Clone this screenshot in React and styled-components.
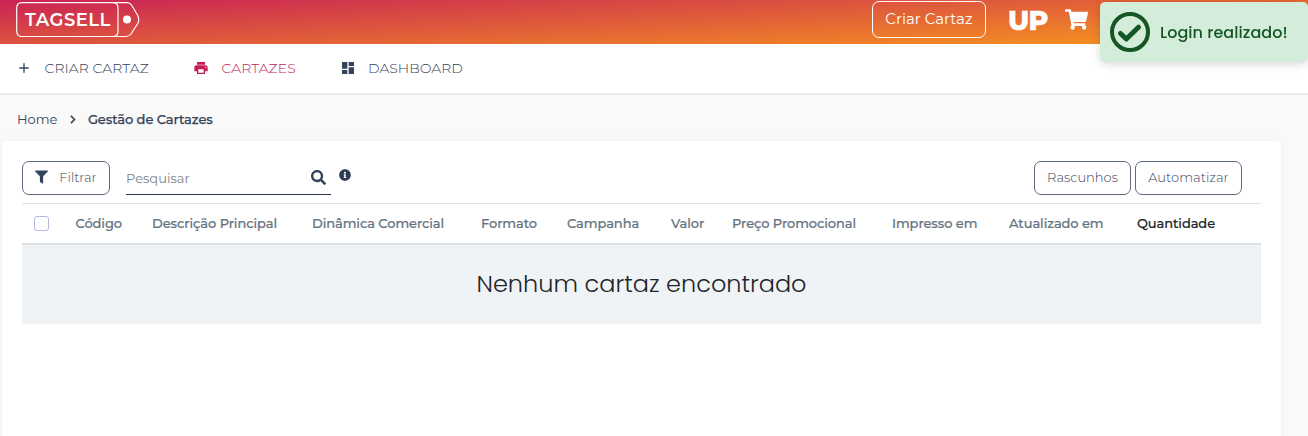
import React from "react";
import styled, { createGlobalStyle } from "styled-components";
import { FaShoppingCart, FaFilter, FaSearch, FaInfoCircle, FaChevronRight } from "react-icons/fa";
import { MdPrint, MdDashboard, MdAdd } from "react-icons/md";

const GlobalStyle = createGlobalStyle`
  * { box-sizing: border-box; }
  body {
    margin: 0;
    height: 436px;
    overflow: hidden;
    background: #f9f9f9;
    color: #34435a;
    font-family: Montserrat, Inter, "Liberation Sans", sans-serif;
  }
`;

const Label = styled.span`
  white-space: nowrap;
  letter-spacing: ${(p) => p.$track || 0}px;
`;

const Header = styled.header`
  display: flex;
  align-items: flex-start;
  height: 44px;
  padding: 1px 220px 0 16px;
  background: linear-gradient(177.1deg, #c92355, #f8991d);
  color: #fff;
`;

const Logo = styled.div`
  display: grid;
  width: 124px;
  height: 36px;
  margin-top: 1px;
  margin-right: auto;
  > * { grid-area: 1 / 1; }
`;

const LogoText = styled(Label)`
  padding-left: 9px;
  font-size: 18px;
  font-weight: 600;
  line-height: 36px;
`;

const HeaderButton = styled.button`
  width: 114px;
  height: 37px;
  padding: 0 0 2px;
  border: 1px solid #fff;
  border-radius: 7px;
  background: transparent;
  color: #fff;
  font: 400 15px Montserrat, Inter, sans-serif;
`;

const Initials = styled(Label)`
  width: 40px;
  margin: 0 17px 0 22px;
  font-size: 27px;
  font-weight: 800;
  line-height: 39px;
  -webkit-text-stroke: 0.4px currentColor;
`;

const CartIcon = styled(FaShoppingCart)`
  width: 23px;
  height: 21px;
  margin-top: 8px;
`;

const Nav = styled.nav`
  display: flex;
  height: 51px;
  padding: 0 0 1px 16px;
  border-bottom: 2px solid #ebebeb;
  background: #fff;
`;

const NavItem = styled.a`
  display: flex;
  align-items: center;
  width: ${(p) => p.$width}px;
  font-size: 14px;
  font-weight: 300;
  color: ${(p) => (p.$active ? "#c41c56" : "#34435a")};
  svg { width: 16px; height: 16px; margin-right: 12.5px; flex: none; }
`;

const Breadcrumb = styled.div`
  display: flex;
  align-items: center;
  height: 46px;
  padding: 2px 0 0 17px;
  font-size: 13px;
  svg {
    width: 8px;
    height: 9px;
    margin: 0 10.5px 0 12px;
    color: #465264;
    stroke: currentColor;
    stroke-width: 30px;
  }
`;

const Current = styled(Label)`
  font-weight: 500;
  -webkit-text-stroke: 0.25px currentColor;
`;

const Card = styled.main`
  width: 1279px;
  height: 310px;
  margin-left: 2px;
  padding: 20px 20px 0;
  border-radius: 5px;
  background: #fff;
  box-shadow: 0 0 12px rgba(0, 0, 0, 0.035);
`;

const Toolbar = styled.div`
  display: flex;
  align-items: flex-start;
  height: 42px;
  padding-right: 19px;
`;

const Button = styled.button`
  display: flex;
  align-items: center;
  justify-content: center;
  width: ${(p) => p.$width}px;
  height: 34px;
  margin-left: ${(p) => p.$left || 0}px;
  padding: 0 0 2px;
  border: 1px solid #5e6b80;
  border-radius: 7px;
  background: #fff;
  color: #34435a;
  font: 300 13px Montserrat, Inter, sans-serif;
  svg { width: 13px; height: 14px; margin-right: 11px; }
`;

const Search = styled.div`
  display: flex;
  align-items: center;
  justify-content: space-between;
  width: 205px;
  height: 34px;
  margin-left: 16px;
  padding-right: 5px;
  border-bottom: 1px solid #26354d;
  color: #7d858f;
  font-size: 13px;
  font-weight: 400;
  svg { width: 15px; height: 15px; color: #34435a; }
`;

const InfoIcon = styled(FaInfoCircle)`
  width: 12px;
  height: 12px;
  margin: 7.5px auto 0 8px;
  color: #2b3a50;
`;

const TableHead = styled.div`
  display: grid;
  grid-template-columns: 53.5px 76.5px 160px 169px 86px 104px 61px 160px 117px 128px 1fr;
  align-items: center;
  height: 42px;
  padding-bottom: 1px;
  border-top: 1px solid #dee2e6;
  border-bottom: 2px solid #dee2e6;
  color: #66737f;
  font-size: 13px;
  font-weight: 500;
`;

const Checkbox = styled.span`
  width: 15px;
  height: 15px;
  margin-left: 12px;
  border: 1px solid #b4b9e0;
  border-radius: 3px;
`;

const Column = styled(Label)`
  color: ${(p) => (p.$dark ? "#212529" : "inherit")};
  -webkit-text-stroke: 0.2px currentColor;
`;

const Empty = styled.div`
  height: 79px;
  background: #eff3f6;
  color: #212529;
  font-family: Poppins, Inter, sans-serif;
  font-size: 24px;
  font-weight: 300;
  line-height: 78px;
  text-align: center;
`;

const Toast = styled.div`
  position: fixed;
  top: 2px;
  right: 0;
  display: flex;
  align-items: center;
  width: 208px;
  height: 60px;
  padding-left: 10px;
  border-radius: 5px;
  background: #d4edda;
  box-shadow: 0 2px 10px rgba(0, 0, 0, 0.16);
  color: #155724;
  font-family: Poppins, Inter, sans-serif;
  font-size: 16px;
  font-weight: 500;
  svg { margin-right: 10px; }
`;

const columns = [
  "Código",
  "Descrição Principal",
  "Dinâmica Comercial",
  "Formato",
  "Campanha",
  "Valor",
  "Preço Promocional",
  "Impresso em",
  "Atualizado em",
  "Quantidade",
];

export default function App() {
  return (
    <>
      <GlobalStyle />
      <Header>
        <Logo>
          <svg width="124" height="36" viewBox="0 0 124 36" fill="none" stroke="#fff" strokeWidth="1.2">
            <path d="M6 .7H111Q114 .7 115.500 3L121.500 13Q124 17.500 121.500 22L115 32Q113 34.500 110 34.500H6Q.7 34.500 .7 29V6Q.7 .7 6 .7Z" />
            <path d="M97 .7Q102 .7 102 6V29Q102 34.500 97 34.500" />
            <circle cx="111" cy="17.500" r="4" fill="#fff" stroke="none" />
          </svg>
          <LogoText $track={0.5}>TAGSELL</LogoText>
        </Logo>
        <HeaderButton><Label>Criar Cartaz</Label></HeaderButton>
        <Initials $track={-0.8}>UP</Initials>
        <CartIcon />
      </Header>
      <Nav>
        <NavItem $width={177}><MdAdd /><Label $track={0.08}>CRIAR CARTAZ</Label></NavItem>
        <NavItem $width={146.5} $active><MdPrint /><Label $track={0.08}>CARTAZES</Label></NavItem>
        <NavItem $width={140}><MdDashboard /><Label>DASHBOARD</Label></NavItem>
      </Nav>
      <Breadcrumb>
        <Label>Home</Label>
        <FaChevronRight />
        <Current $track={-0.06}>Gestão de Cartazes</Current>
      </Breadcrumb>
      <Card>
        <Toolbar>
          <Button $width={88}><FaFilter /><Label>Filtrar</Label></Button>
          <Search><Label>Pesquisar</Label><FaSearch /></Search>
          <InfoIcon />
          <Button $width={97}><Label>Rascunhos</Label></Button>
          <Button $width={107} $left={4}><Label $track={0.05}>Automatizar</Label></Button>
        </Toolbar>
        <TableHead>
          <Checkbox />
          {columns.map((name) => (
            <Column key={name} $track={-0.08} $dark={name === "Quantidade"}>{name}</Column>
          ))}
        </TableHead>
        <Empty><Label>Nenhum cartaz encontrado</Label></Empty>
      </Card>
      <Toast>
        <svg width="40" height="40" viewBox="0 0 40 40" fill="none" stroke="#155724">
          <circle cx="20" cy="20" r="18" strokeWidth="4" />
          <path d="M10.500 21.500L16.300 27L28.500 15.200" strokeWidth="5" strokeLinecap="round" strokeLinejoin="round" />
        </svg>
        <Label $track={0.05}>Login realizado!</Label>
      </Toast>
    </>
  );
}
